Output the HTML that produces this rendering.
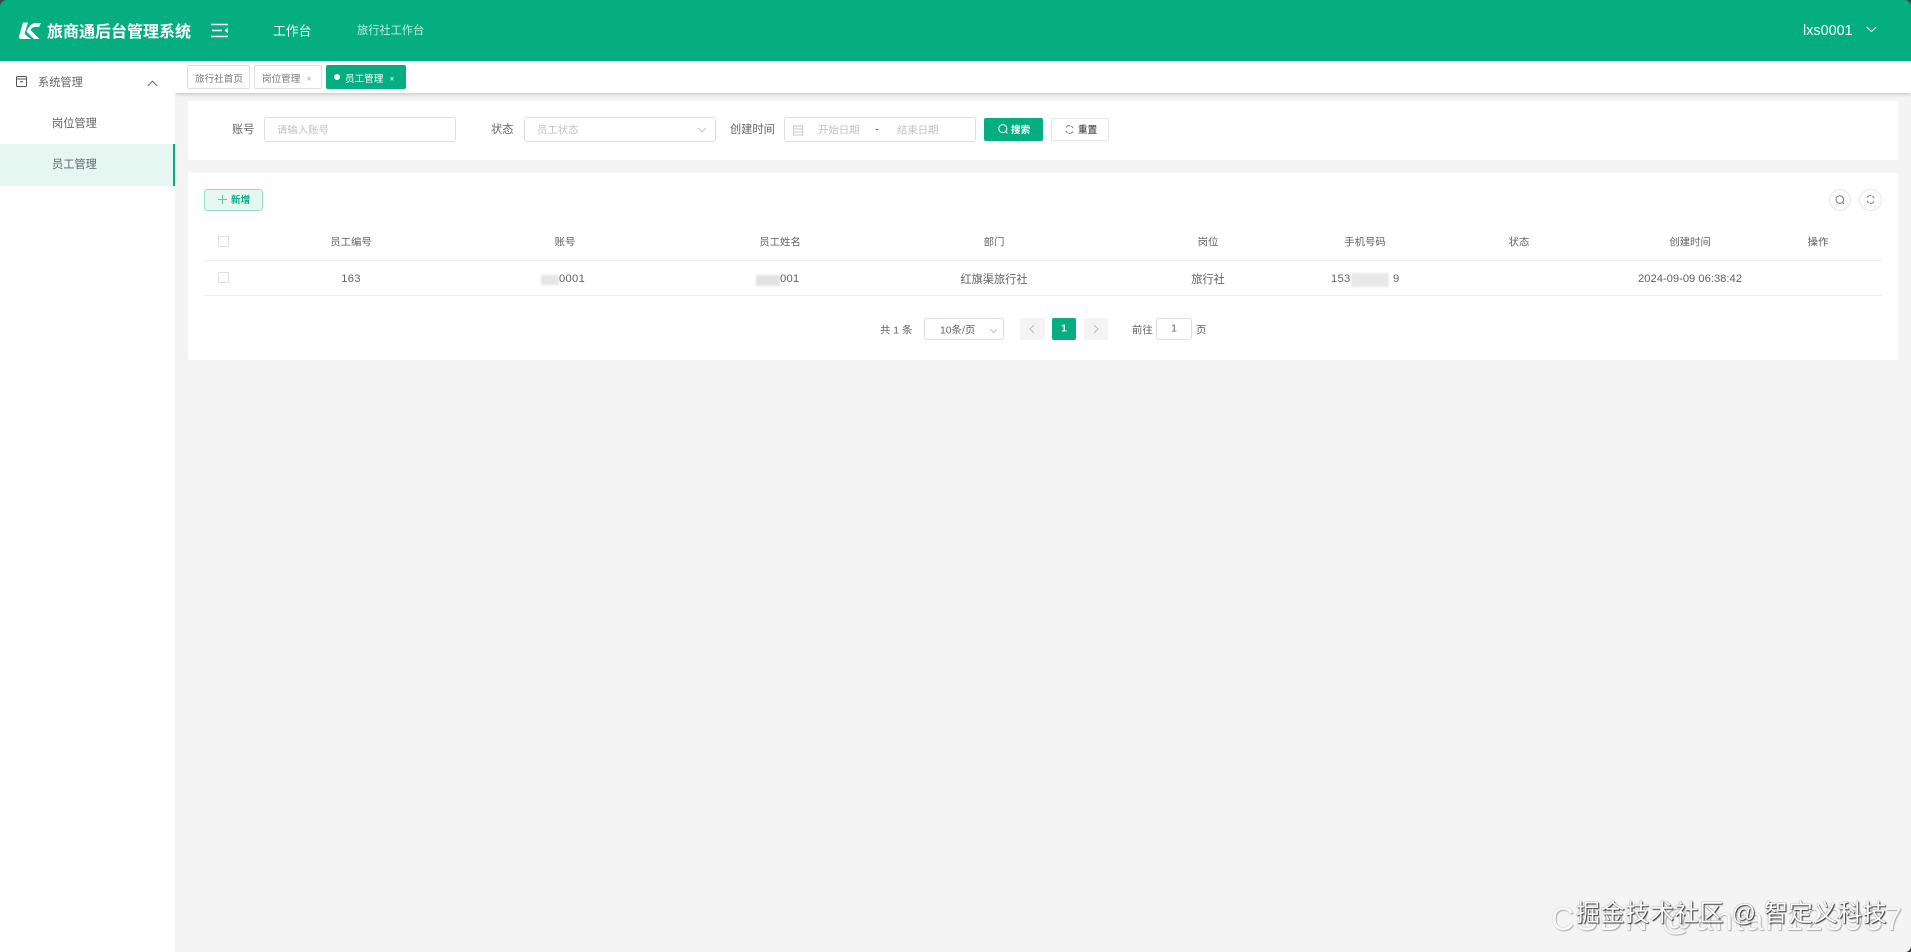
<!DOCTYPE html>
<html lang="zh-CN">
<head>
<meta charset="utf-8">
<title>旅商通后台管理系统</title>
<style>
html,body{margin:0;padding:0;}
body{width:1911px;height:952px;position:relative;overflow:hidden;background:#f4f4f4;font-family:"Liberation Sans","Noto Sans CJK SC",sans-serif;font-size:11.2px;color:#606266;}
.a{position:absolute;white-space:nowrap;}
.c{transform:translate(-50%,-50%);}
.m{transform:translateY(-50%);}
.box{position:absolute;box-sizing:border-box;background:#fff;}
.ph{color:#bfc2c8;}
.blur{position:absolute;background:#e6e6e6;filter:blur(1px);}
.th{font-size:10.4px;}
.wm{font-family:"Liberation Sans","Noto Sans CJK SC",sans-serif;}
</style>
</head>
<body>
<!-- tabs -->
<div class="box" style="left:175px;top:61px;width:1736px;height:32px;box-shadow:0 1px 4px rgba(0,0,0,.22);"></div>
<div class="box" style="left:187px;top:65px;width:63px;height:24px;border:1px solid #dcdfe6;border-radius:2px;"></div>
<div class="a m" style="left:195px;top:77.5px;font-size:9.6px;color:#777;">旅行社首页</div>
<div class="box" style="left:254px;top:65px;width:68px;height:24px;border:1px solid #dcdfe6;border-radius:2px;"></div>
<div class="a m" style="left:262px;top:77.5px;font-size:9.6px;color:#777;">岗位管理</div>
<div class="a c" style="left:309px;top:78.5px;font-size:8px;color:#a0a3a8;">×</div>
<div class="box" style="left:326px;top:65px;width:80px;height:24px;background:#04ae80;border-radius:2px;"></div>
<div class="box" style="left:334px;top:74px;width:6px;height:6px;border-radius:50%;"></div>
<div class="a m" style="left:345px;top:77.5px;font-size:9.6px;color:#fff;">员工管理</div>
<div class="a c" style="left:392px;top:78.5px;font-size:8px;color:#fff;">×</div>

<!-- header -->
<div class="box" style="left:0;top:0;width:1911px;height:61px;background:#04ae80;"></div>
<svg class="a" style="left:18px;top:21px;" width="24" height="19" viewBox="0 0 24 19"><path d="M5 1.5H10L7 11.5Q6.6 14 9 15L13 18H3Q0.5 18 1.2 15Z" fill="#fff"/><path d="M23 2L21 6H17Q14 6 12.5 9L21.5 18H16L8.5 10.5Q12 2 18 2Z" fill="#fff"/></svg>
<div class="a m" style="left:47px;top:29.5px;font-size:16px;font-weight:700;color:#fff;">旅商通后台管理系统</div>
<svg class="a" style="left:211px;top:23px;" width="18" height="15" viewBox="0 0 18 15"><path d="M0 1.5H17M1 7.5H11M0 13.5H17" stroke="#fff" stroke-width="1.4" fill="none"/><path d="M17 4.5V10.5L13.5 7.5Z" fill="#fff"/></svg>
<div class="a m" style="left:273px;top:30px;font-size:12.8px;color:#fff;">工作台</div>
<div class="a m" style="left:357px;top:30px;font-size:11.2px;color:#c3ece0;">旅行社工作台</div>
<div class="a m" style="left:1803px;top:31px;font-size:14.4px;color:#fff;">lxs0001</div>
<svg class="a" style="left:1866px;top:26px;" width="11" height="7" viewBox="0 0 11 7"><path d="M0.8 1L5.5 5.6L10.2 1" stroke="#fff" stroke-width="1" fill="none"/></svg>

<!-- sidebar -->
<div class="box" style="left:0;top:61px;width:175px;height:891px;"></div>
<svg class="a" style="left:15px;top:75px;" width="13" height="13" viewBox="0 0 13 13"><rect x="1.5" y="1.5" width="10" height="10" rx="1" stroke="#555" fill="none"/><path d="M1.5 4H11.5M5 6.8H8" stroke="#555" fill="none"/></svg>
<div class="a m" style="left:38px;top:82px;">系统管理</div>
<svg class="a" style="left:147px;top:80px;" width="11" height="7" viewBox="0 0 11 7"><path d="M0.8 6L5.5 1.2L10.2 6" stroke="#666" stroke-width="1" fill="none"/></svg>
<div class="a m" style="left:52px;top:123px;">岗位管理</div>
<div class="box" style="left:0;top:144px;width:175px;height:42px;background:#e6f7f2;border-right:2px solid #04ae80;"></div>
<div class="a m" style="left:52px;top:164px;">员工管理</div>

<!-- search card -->
<div class="box" style="left:188px;top:101px;width:1710px;height:59px;border-radius:2px;"></div>
<div class="a m" style="left:232px;top:129px;">账号</div>
<div class="box" style="left:264px;top:117px;width:192px;height:25px;border:1px solid #dcdfe6;border-radius:3px;"></div>
<div class="a m ph" style="left:277px;top:128.5px;font-size:10.4px;">请输入账号</div>
<div class="a m" style="left:491px;top:129px;">状态</div>
<div class="box" style="left:524px;top:117px;width:192px;height:25px;border:1px solid #dcdfe6;border-radius:3px;"></div>
<div class="a m ph" style="left:537px;top:128.5px;font-size:10.4px;">员工状态</div>
<svg class="a" style="left:697px;top:127px;" width="10" height="6" viewBox="0 0 10 6"><path d="M1 1L5 5L9 1" stroke="#c0c4cc" stroke-width="1" fill="none"/></svg>
<div class="a m" style="left:730px;top:129px;">创建时间</div>
<div class="box" style="left:784px;top:117px;width:192px;height:25px;border:1px solid #dcdfe6;border-radius:3px;"></div>
<svg class="a" style="left:792px;top:124px;" width="12" height="12" viewBox="0 0 12 12"><rect x="1.5" y="2" width="9" height="9" stroke="#c8cbd0" fill="none"/><path d="M1.5 5H10.5M1.5 8H10.5M4 1V3M8 1V3" stroke="#c8cbd0" fill="none"/></svg>
<div class="a m ph" style="left:818px;top:128.5px;font-size:10.4px;">开始日期</div>
<div class="a c" style="left:877px;top:130px;font-size:10.4px;color:#444;">-</div>
<div class="a m ph" style="left:897px;top:128.5px;font-size:10.4px;">结束日期</div>
<div class="box" style="left:984px;top:118px;width:59px;height:23px;background:#04ae80;border-radius:2px;"></div>
<svg class="a" style="left:997px;top:123px;" width="12" height="12" viewBox="0 0 12 12"><circle cx="5.8" cy="5.6" r="4" stroke="#fff" fill="none"/><path d="M8.6 8.6L10.4 10.4" stroke="#fff" fill="none"/></svg>
<div class="a m" style="left:1011px;top:128.5px;font-size:9.6px;font-weight:700;color:#fff;">搜索</div>
<div class="box" style="left:1051px;top:118px;width:58px;height:23px;border:1px solid #e4e6eb;border-radius:2px;"></div>
<svg class="a" style="left:1064px;top:124px;" width="11" height="11" viewBox="0 0 11 11"><path d="M2 3.5A4 4 0 0 1 9 4M9 7.5A4 4 0 0 1 2 7" stroke="#777" stroke-dasharray="5 1" fill="none"/></svg>
<div class="a m" style="left:1078px;top:128.5px;font-size:9.6px;font-weight:700;color:#606266;">重置</div>

<!-- table card -->
<div class="box" style="left:188px;top:173px;width:1710px;height:187px;border-radius:2px;"></div>
<div class="box" style="left:204px;top:189px;width:59px;height:22px;background:#e6f7f2;border:1px solid #9bdcc8;border-radius:3px;"></div>
<svg class="a" style="left:217px;top:194px;" width="11" height="11" viewBox="0 0 11 11"><path d="M5.5 1V10M1 5.5H10" stroke="#5cc8a8" fill="none"/></svg>
<div class="a m" style="left:231px;top:199px;font-size:9.6px;font-weight:700;color:#04ae80;">新增</div>
<div class="box" style="left:1829px;top:189px;width:22px;height:22px;border:1px solid #e4e6eb;border-radius:50%;"></div>
<svg class="a" style="left:1834px;top:194px;" width="12" height="12" viewBox="0 0 12 12"><circle cx="5.8" cy="5.6" r="3.8" stroke="#777" fill="none"/><path d="M8.4 8.4L10 10" stroke="#777" fill="none"/></svg>
<div class="box" style="left:1859px;top:189px;width:23px;height:22px;border:1px solid #e4e6eb;border-radius:50%;"></div>
<svg class="a" style="left:1865px;top:194px;" width="11" height="11" viewBox="0 0 11 11"><path d="M2 3.5A4 4 0 0 1 9 4M9 7.5A4 4 0 0 1 2 7" stroke="#777" stroke-dasharray="5 1" fill="none"/></svg>

<div class="box" style="left:218px;top:236px;width:11px;height:11px;border:1px solid #dcdfe6;border-radius:1px;"></div>
<div class="a c th" style="left:351px;top:241px;">员工编号</div>
<div class="a c th" style="left:565px;top:241px;">账号</div>
<div class="a c th" style="left:780px;top:241px;">员工姓名</div>
<div class="a c th" style="left:994px;top:241px;">部门</div>
<div class="a c th" style="left:1208px;top:241px;">岗位</div>
<div class="a c th" style="left:1365px;top:241px;">手机号码</div>
<div class="a c th" style="left:1519px;top:241px;">状态</div>
<div class="a c th" style="left:1690px;top:241px;">创建时间</div>
<div class="a c th" style="left:1818px;top:241px;">操作</div>
<div class="box" style="left:204px;top:260px;width:1678px;height:1px;background:#ebeef5;"></div>

<div class="box" style="left:218px;top:272px;width:11px;height:11px;border:1px solid #dcdfe6;border-radius:1px;"></div>
<div class="a c" style="left:351px;top:278.5px;letter-spacing:.3px;">163</div>
<div class="blur" style="left:541px;top:275px;width:18px;height:10px;"></div>
<div class="a m" style="left:559px;top:278.5px;letter-spacing:.3px;">0001</div>
<div class="blur" style="left:756px;top:275px;width:24px;height:11px;background:#e2e2e2;"></div>
<div class="a m" style="left:780px;top:278.5px;letter-spacing:.3px;">001</div>
<div class="a c" style="left:994px;top:278.5px;">红旗渠旅行社</div>
<div class="a c" style="left:1208px;top:278.5px;">旅行社</div>
<div class="a m" style="left:1331px;top:278.5px;letter-spacing:.3px;">153</div>
<div class="blur" style="left:1351px;top:273px;width:38px;height:14px;background:#e8e8e8;"></div>
<div class="a m" style="left:1393px;top:278.5px;">9</div>
<div class="a c" style="left:1690px;top:278.5px;">2024-09-09 06:38:42</div>
<div class="box" style="left:204px;top:295px;width:1678px;height:1px;background:#ebeef5;"></div>

<!-- pagination -->
<div class="a m" style="left:880px;top:329px;font-size:10.4px;">共 1 条</div>
<div class="box" style="left:924px;top:318px;width:80px;height:22px;border:1px solid #dcdfe6;border-radius:3px;"></div>
<div class="a m" style="left:940px;top:328.5px;font-size:10.4px;">10条/页</div>
<svg class="a" style="left:989px;top:328px;" width="9" height="6" viewBox="0 0 9 6"><path d="M1 1L4.5 4.5L8 1" stroke="#c0c4cc" fill="none"/></svg>
<div class="box" style="left:1020px;top:318px;width:25px;height:22px;background:#f4f4f5;border-radius:2px;"></div>
<svg class="a" style="left:1029px;top:324px;" width="6" height="10" viewBox="0 0 6 10"><path d="M5 1L1 5L5 9" stroke="#b8bcc4" fill="none"/></svg>
<div class="box" style="left:1052px;top:318px;width:24px;height:22px;background:#04ae80;border-radius:2px;"></div>
<div class="a c" style="left:1064px;top:329px;font-size:10.4px;font-weight:700;color:#fff;">1</div>
<div class="box" style="left:1084px;top:318px;width:24px;height:22px;background:#f4f4f5;border-radius:2px;"></div>
<svg class="a" style="left:1093px;top:324px;" width="6" height="10" viewBox="0 0 6 10"><path d="M1 1L5 5L1 9" stroke="#b8bcc4" fill="none"/></svg>
<div class="a m" style="left:1132px;top:328.5px;font-size:10.4px;">前往</div>
<div class="box" style="left:1156px;top:318px;width:36px;height:22px;border:1px solid #dcdfe6;border-radius:3px;"></div>
<div class="a c" style="left:1174px;top:329px;font-size:10.4px;">1</div>
<div class="a m" style="left:1196px;top:328.5px;font-size:10.4px;">页</div>

<!-- watermarks -->
<div class="a wm" style="left:1551px;top:901px;font-size:32px;line-height:36px;color:#f8f8f8;letter-spacing:2px;text-shadow:0 0 1px #a0a0a0,1px 1px 1px #b0b0b0;">CSDN @antan123987</div>
<div class="a wm" style="left:1576px;top:899px;font-size:24px;line-height:30px;color:#fff;letter-spacing:.7px;text-shadow:1px 1px 1px #333,0 0 1px #444;">掘金技术社区 @ 智定义科技</div>

<!-- window corners -->
<svg class="a" style="left:0;top:0;" width="8" height="8" viewBox="0 0 8 8"><path d="M0 0H6Q1 1 0 6Z" fill="#3a4a50"/></svg>
<svg class="a" style="left:1903px;top:0;" width="8" height="8" viewBox="0 0 8 8"><path d="M8 0H2Q7 1 8 6Z" fill="#3a4a50"/></svg>
<svg class="a" style="left:1906px;top:947px;" width="5" height="5" viewBox="0 0 5 5"><path d="M5 5H0Q4 4 5 0Z" fill="#3a3a3a"/></svg>
</body>
</html>
